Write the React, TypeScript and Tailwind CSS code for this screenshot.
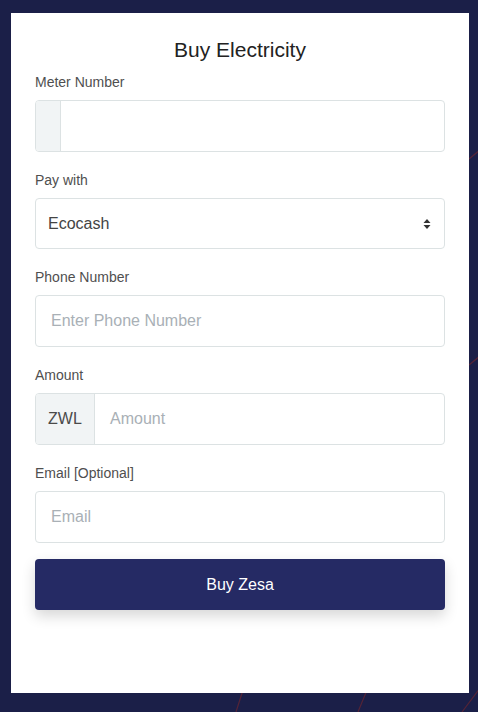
import React from "react";

function Label({ children }: { children: React.ReactNode }) {
  return (
    <div className="text-[14px] leading-[20px] text-[#4f4f4f] mb-[8px]">{children}</div>
  );
}

export default function App() {
  const font = { fontFamily: '"Liberation Sans", Arial, sans-serif' };
  return (
    <div
      className="relative h-[712px] w-[478px] overflow-hidden bg-[#1b1f48] pt-[13px] pl-[11px] pr-[9px]"
      style={font}
    >
      <svg className="absolute inset-0" width="478" height="712" viewBox="0 0 478 712">
        <g stroke="#5b2535" strokeWidth="1.2" fill="none" opacity="0.9">
          <line x1="243" y1="690" x2="236" y2="712" />
          <line x1="367" y1="690" x2="358" y2="712" />
          <line x1="480" y1="688" x2="462" y2="712" />
          <line x1="469" y1="159" x2="480" y2="150" />
          <line x1="469" y1="365" x2="480" y2="356" />
        </g>
      </svg>
      <div className="relative h-[680px] w-[458px] bg-white pt-[23px] px-[24px]">
        <h1 className="text-center text-[21px] leading-[28px] text-[#222] mb-[8px]">Buy Electricity</h1>

        <Label>Meter Number</Label>
        <div className="flex h-[52px] w-[410px] rounded-[4px] border border-[#dce2e3] overflow-hidden">
          <div className="w-[25px] bg-[#f1f4f5] border-r border-[#dce2e3]" />
          <input className="flex-1 px-[16px] text-[16px] outline-none" style={font} />
        </div>

        <div className="mt-[18px]">
          <Label>Pay with</Label>
          <div className="relative flex h-[51px] w-[410px] items-center rounded-[4px] border border-[#dce2e3] pl-[12px] text-[16px] text-[#444]">
            Ecocash
            <svg className="absolute right-[13px] top-[19px]" width="8" height="12" viewBox="0 0 8 12">
              <path d="M4 1 L7.5 5 L0.5 5 Z M4 11 L7.5 7 L0.5 7 Z" fill="#333" />
            </svg>
          </div>
        </div>

        <div className="mt-[18px]">
          <Label>Phone Number</Label>
          <div className="flex h-[52px] w-[410px] items-center rounded-[4px] border border-[#dce2e3] px-[15px] text-[16px] text-[#a9b0b6]">
            Enter Phone Number
          </div>
        </div>

        <div className="mt-[18px]">
          <Label>Amount</Label>
          <div className="flex h-[52px] w-[410px] rounded-[4px] border border-[#dce2e3] overflow-hidden">
            <div className="flex w-[59px] items-center bg-[#f1f4f5] border-r border-[#dce2e3] pl-[12px] text-[16px] text-[#4a4a4a]">
              ZWL
            </div>
            <div className="flex flex-1 items-center px-[15px] text-[16px] text-[#a9b0b6]">Amount</div>
          </div>
        </div>

        <div className="mt-[18px]">
          <Label>Email [Optional]</Label>
          <div className="flex h-[52px] w-[410px] items-center rounded-[4px] border border-[#dce2e3] px-[15px] text-[16px] text-[#a9b0b6]">
            Email
          </div>
        </div>

        <button
          className="mt-[16px] flex h-[51px] w-[410px] items-center justify-center rounded-[4px] bg-[#252a64] text-[16px] text-white shadow-[0_6px_14px_rgba(0,0,0,0.16)]"
          style={font}
        >
          Buy Zesa
        </button>
      </div>
    </div>
  );
}
